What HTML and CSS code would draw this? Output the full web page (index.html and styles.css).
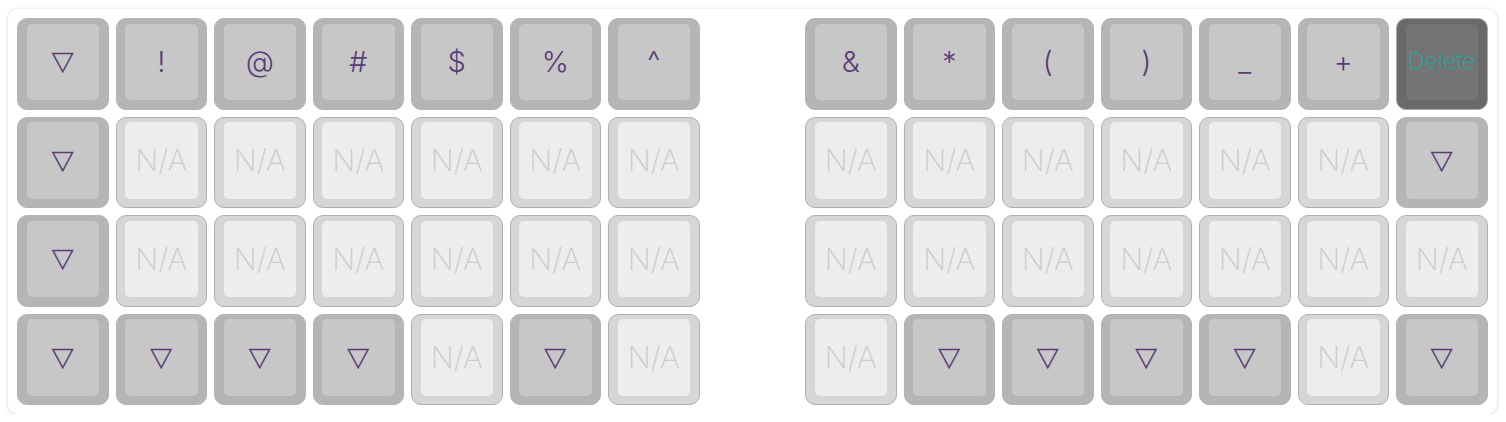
FILE: index.html
```html
<!DOCTYPE html>
<html>
<head>
<meta charset="utf-8">
<link rel="stylesheet" href="styles.css">
</head>
<body>
<div class="board">
  <div class="key"><div class="cap"><span class="tri">▽</span></div></div>
  <div class="key"><div class="cap"><span class="sym">!</span></div></div>
  <div class="key"><div class="cap"><span class="sym">@</span></div></div>
  <div class="key"><div class="cap"><span class="sym">#</span></div></div>
  <div class="key"><div class="cap"><span class="sym">$</span></div></div>
  <div class="key"><div class="cap"><span class="sym">%</span></div></div>
  <div class="key"><div class="cap"><span class="sym">^</span></div></div>
  <div class="gap"></div>
  <div class="key"><div class="cap"><span class="sym">&amp;</span></div></div>
  <div class="key"><div class="cap"><span class="sym">*</span></div></div>
  <div class="key"><div class="cap"><span class="sym">(</span></div></div>
  <div class="key"><div class="cap"><span class="sym">)</span></div></div>
  <div class="key"><div class="cap"><span class="sym">_</span></div></div>
  <div class="key"><div class="cap"><span class="sym">+</span></div></div>
  <div class="key dark"><div class="cap"><span class="word">Delete</span></div></div>

  <div class="key"><div class="cap"><span class="tri">▽</span></div></div>
  <div class="key na"><div class="cap"><span class="nat">N/A</span></div></div>
  <div class="key na"><div class="cap"><span class="nat">N/A</span></div></div>
  <div class="key na"><div class="cap"><span class="nat">N/A</span></div></div>
  <div class="key na"><div class="cap"><span class="nat">N/A</span></div></div>
  <div class="key na"><div class="cap"><span class="nat">N/A</span></div></div>
  <div class="key na"><div class="cap"><span class="nat">N/A</span></div></div>
  <div class="gap"></div>
  <div class="key na"><div class="cap"><span class="nat">N/A</span></div></div>
  <div class="key na"><div class="cap"><span class="nat">N/A</span></div></div>
  <div class="key na"><div class="cap"><span class="nat">N/A</span></div></div>
  <div class="key na"><div class="cap"><span class="nat">N/A</span></div></div>
  <div class="key na"><div class="cap"><span class="nat">N/A</span></div></div>
  <div class="key na"><div class="cap"><span class="nat">N/A</span></div></div>
  <div class="key"><div class="cap"><span class="tri">▽</span></div></div>

  <div class="key"><div class="cap"><span class="tri">▽</span></div></div>
  <div class="key na"><div class="cap"><span class="nat">N/A</span></div></div>
  <div class="key na"><div class="cap"><span class="nat">N/A</span></div></div>
  <div class="key na"><div class="cap"><span class="nat">N/A</span></div></div>
  <div class="key na"><div class="cap"><span class="nat">N/A</span></div></div>
  <div class="key na"><div class="cap"><span class="nat">N/A</span></div></div>
  <div class="key na"><div class="cap"><span class="nat">N/A</span></div></div>
  <div class="gap"></div>
  <div class="key na"><div class="cap"><span class="nat">N/A</span></div></div>
  <div class="key na"><div class="cap"><span class="nat">N/A</span></div></div>
  <div class="key na"><div class="cap"><span class="nat">N/A</span></div></div>
  <div class="key na"><div class="cap"><span class="nat">N/A</span></div></div>
  <div class="key na"><div class="cap"><span class="nat">N/A</span></div></div>
  <div class="key na"><div class="cap"><span class="nat">N/A</span></div></div>
  <div class="key na"><div class="cap"><span class="nat">N/A</span></div></div>

  <div class="key"><div class="cap"><span class="tri">▽</span></div></div>
  <div class="key"><div class="cap"><span class="tri">▽</span></div></div>
  <div class="key"><div class="cap"><span class="tri">▽</span></div></div>
  <div class="key"><div class="cap"><span class="tri">▽</span></div></div>
  <div class="key na"><div class="cap"><span class="nat">N/A</span></div></div>
  <div class="key"><div class="cap"><span class="tri">▽</span></div></div>
  <div class="key na"><div class="cap"><span class="nat">N/A</span></div></div>
  <div class="gap"></div>
  <div class="key na"><div class="cap"><span class="nat">N/A</span></div></div>
  <div class="key"><div class="cap"><span class="tri">▽</span></div></div>
  <div class="key"><div class="cap"><span class="tri">▽</span></div></div>
  <div class="key"><div class="cap"><span class="tri">▽</span></div></div>
  <div class="key"><div class="cap"><span class="tri">▽</span></div></div>
  <div class="key na"><div class="cap"><span class="nat">N/A</span></div></div>
  <div class="key"><div class="cap"><span class="tri">▽</span></div></div>
</div>
</body>
</html>
```
FILE: styles.css
```css
html, body {
  margin: 0;
  padding: 0;
  background: #ffffff;
}
body {
  padding: 9px 0 0 8px;
  font-family: Inter, "Noto Sans", sans-serif;
}
.board {
  width: 1488.5px;
  box-sizing: border-box;
  padding: 9px;
  background: #ffffff;
  border-radius: 9px;
  box-shadow: 0 0 2px rgba(0, 0, 0, 0.16), 0 1px 4px rgba(0, 0, 0, 0.1);
  display: grid;
  grid-template-columns: repeat(15, 91.5px);
  grid-auto-rows: 91.5px;
  gap: 7px;
}
.key {
  box-sizing: border-box;
  border-radius: 10px;
  border: 1.5px solid #b3b4b3;
  background: #b4b5b4;
  padding: 4.5px 8.5px 8.5px;
  display: flex;
}
.cap {
  flex: 1;
  border-radius: 5px;
  background: #c6c7c6;
  display: flex;
  align-items: center;
  justify-content: center;
}
.key.na {
  border-color: #b0b0b0;
  background: #d6d6d6;
}
.key.na .cap {
  background: #ededed;
}
.key.dark {
  border-color: #a9aaa9;
  background: #686968;
}
.key.dark .cap {
  background: #737473;
}
.sym {
  color: #5b3c78;
  font-size: 29px;
  font-weight: 300;
  line-height: 1;
}
.tri {
  color: #5b3c78;
  font-family: "DejaVu Sans", sans-serif;
  font-size: 29px;
  line-height: 1;
  transform: scaleY(0.92);
}
.nat {
  color: #cdcccc;
  font-size: 30px;
  font-weight: 200;
  line-height: 1;
}
.word {
  color: #1ea9a8;
  font-size: 23px;
  font-weight: 200;
  line-height: 1;
}
```
